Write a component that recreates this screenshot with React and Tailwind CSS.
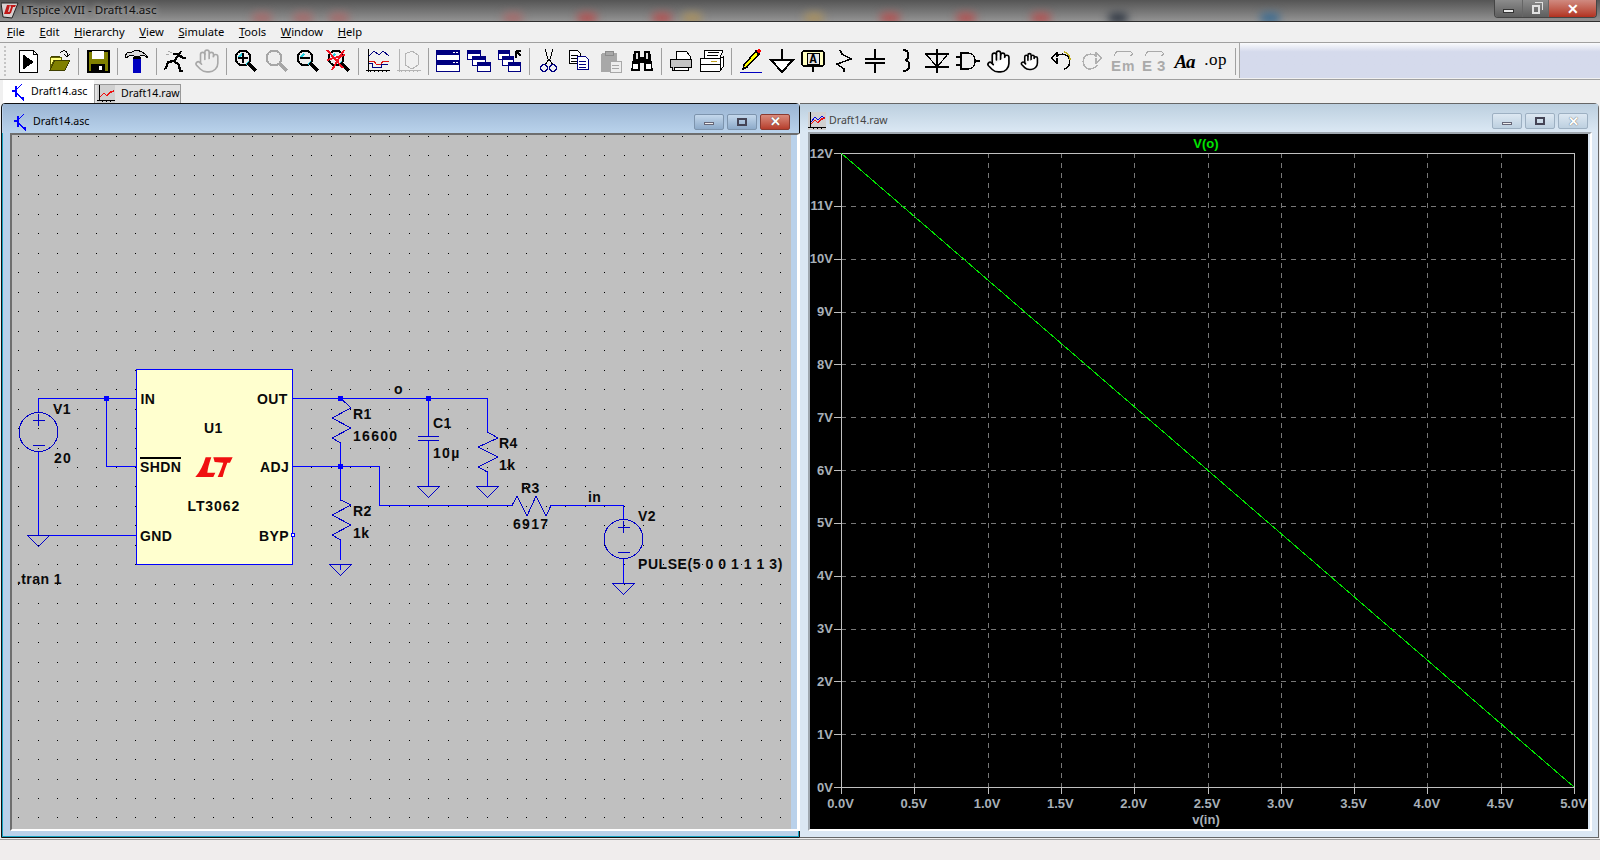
import { Hand } from "lucide-react";

const uiFont = "font-['Noto_Sans',sans-serif]";
const menus = ["File", "Edit", "Hierarchy", "View", "Simulate", "Tools", "Window", "Help"];
const blobs = [
  [262, "#a56a6a"], [303, "#a56a6a"], [339, "#a56a6a"], [513, "#a56a6a"], [587, "#b25050"], [662, "#b25050"],
  [692, "#a89060"], [814, "#a89060"], [890, "#b25050"], [966, "#b25050"], [1041, "#b25050"], [1118, "#2c3440"], [1270, "#3a6a90"],
];

function Ic({ children }) {
  return (
    <svg width="24" height="24" viewBox="0 0 24 24" shapeRendering="crispEdges" fill="none" stroke="#000" className="overflow-visible">
      {children}
    </svg>
  );
}

function Glass({ c = "#000", children }) {
  return (
    <Ic>
      <circle cx="9" cy="9" r="7.5" stroke={c} strokeWidth="2" fill="#eee" />
      {c === "#000" && <path d="M4 7l3-3 2 1-4 4zM11 15l3-3 1 1-2 3z" fill="#22cfe0" stroke="none" />}
      <path d="M14 14l8 8" stroke={c} strokeWidth="3.5" />
      {children}
    </Ic>
  );
}

function Page({ x, y, c = "#000" }) {
  return (
    <g>
      <path d={`M${x} ${y}h8l3 3v10h-11z`} fill="#fff" stroke={c} />
      <path d={`M${x + 2} ${y + 5}h7M${x + 2} ${y + 8}h7M${x + 2} ${y + 11}h7`} stroke={c} />
    </g>
  );
}

function Win({ x, y, w = 13, h = 9 }) {
  return (
    <g>
      <rect x={x} y={y} width={w} height={h} fill="#fff" stroke="#000080" />
      <rect x={x} y={y} width={w} height="3" fill="#000080" stroke="none" />
    </g>
  );
}

const icons = [
  <Ic><path d="M3 1h14l4 4v18h-18z" fill="#fff" /><path d="M17 1v4h4" /><path d="M7 6l10 7-10 7z" fill="#000" /></Ic>,
  <Ic><path d="M4 9h8v-2h-8z" fill="#808000" stroke="#404000" /><path d="M3 8h11v3h-7l-4 9z" fill="#ffff80" stroke="#606000" /><path d="M3 21l5-10h15l-5 10z" fill="#808000" stroke="#404000" /><path d="M13 4c2-3 6-3 7 0v3M17 5l3 3 3-3" stroke="#000" /></Ic>,
  <Ic><rect x="1.5" y="1.5" width="21" height="21" fill="#808000" stroke="#000" strokeWidth="2" /><rect x="6" y="2" width="12" height="8" fill="#fff" stroke="none" /><rect x="5" y="15" width="14" height="7" fill="#000" stroke="none" /><rect x="13" y="17" width="3" height="4" fill="#fff" stroke="none" /></Ic>,
  <Ic><path d="M0 7L2 4L7 3C12 0 19 2 23 9C19 6 16 6 15 7H9L6 6L1 9Z" fill="#dcdcdc" /><rect x="8" y="10" width="8" height="14" fill="#0000c0" stroke="none" /><rect x="8" y="8" width="8" height="2" fill="#000" stroke="none" /></Ic>,
  <Ic><path d="M17 2l-2 4-5 6 5 4 1 6h3M10 12l-6 1-2 6-2 1M15 5h-6M15 6l4 3h3" stroke="#000" strokeWidth="2.2" /><path d="M4 2l4 2M2 5l3 1" stroke="#aaa" /></Ic>,
  <Hand size={26} strokeWidth={1.5} color="#a8a8a8" fill="#eee" />,
  <Glass><path d="M9 4v10M4 9h10" strokeWidth="2.5" /></Glass>,
  <Glass c="#a6a6a6" />,
  <Glass><path d="M4 9h10" strokeWidth="2.5" /></Glass>,
  <Glass><path d="M0 1l16 18M17 1l-12 20M0 11l18-5" stroke="#f01020" strokeWidth="2" /></Glass>,
  <Ic><path d="M2 0v23M0 21h24M4 23v-2M8 23v-2M12 23v-2M16 23v-2M20 23v-2" /><path d="M3 7l5-5 5 4 4-4 6 5" stroke="#000080" /><path d="M3 12h5l2 3h5l2-3 6 1" stroke="#e01010" /><path d="M3 14h3v4h9v-3h7" stroke="#000080" /></Ic>,
  <Ic><path d="M2 0v23M0 21h24M4 23v-2M8 23v-2M12 23v-2M16 23v-2M20 23v-2M8 5l7-3 6 4v10l-6 4-7-4z" stroke="#b4b4b4" /></Ic>,
  <Ic><rect x="0.5" y="1.5" width="23" height="21" fill="#fff" stroke="#000080" strokeWidth="1.5" /><rect x="1" y="2" width="22" height="4" fill="#000080" stroke="none" /><rect x="1" y="12" width="22" height="4" fill="#000080" stroke="none" /><path d="M1 11h22" stroke="#000080" /><path d="M17 3h2M20 3h2M17 13h2M20 13h2" stroke="#fff" /></Ic>,
  <Ic><Win x={0.5} y={1.5} /><Win x={5.5} y={7.5} /><Win x={10.5} y={13.5} /></Ic>,
  <Ic><Win x={0.5} y={1.5} w={11} /><Win x={4.5} y={7.5} w={11} /><Win x={10.5} y={13.5} w={12} /><path d="M18 9V2M18 2h5M18 2l5 5" stroke="#000" strokeWidth="1.5" /></Ic>,
  <Ic><path d="M8 0l3 10 2 0 3-10M12 10l-4 6M12 10l4 6" stroke="#000" /><circle cx="7" cy="19" r="3.5" stroke="#000080" strokeWidth="1.5" /><circle cx="16" cy="19" r="3.5" stroke="#000080" strokeWidth="1.5" /></Ic>,
  <Ic><Page x={1} y={1} /><Page x={9} y={7} c="#000080" /></Ic>,
  <Ic><rect x="2" y="4" width="16" height="19" rx="2" fill="#a8a8a8" stroke="none" /><rect x="6" y="2" width="8" height="4" fill="#a8a8a8" stroke="#8a8a8a" /><path d="M11 12h11v11h-11z" fill="#eee" stroke="#a8a8a8" /><path d="M13 16h7M13 19h7" stroke="#a8a8a8" /></Ic>,
  <Ic><path d="M4 2h6v6h4v-6h6l3 20h-9v-8h-4v8h-9z" fill="#000" stroke="none" /><path d="M3 15h5v5h-5zM16 15h5v5h-5z" fill="#fff" stroke="none" /><path d="M6 4h2v6h-2zM16 4h2v6h-2z" fill="#ddd" stroke="none" /></Ic>,
  <Ic><path d="M7 2h10l4 5v3h-14z" fill="#fff" /><path d="M1 10h21v8h-3v3h-16v-3h-2z" fill="#c4c4c4" /><path d="M5 18h14v3h-14z" fill="#fff" /></Ic>,
  <Ic><path d="M5 1h18l-3 8h-16z" fill="#fff" /><path d="M8 3h11M7 6h11" /><path d="M0 9h20l3-1v10l-3 4h-20z" fill="#fff" /><path d="M1 15h19M20 9v13" /><path d="M11 12h6" stroke="#c0a020" /></Ic>,
  <Ic><path d="M5 16l-1 4 4-2 12-13-3-3z" fill="#ffff00" stroke="#000" strokeWidth="1.5" /><path d="M17 2l3 3 2-3-2-2z" fill="#ff0000" stroke="none" /><path d="M1 23h22" stroke="#0000c0" /></Ic>,
  <Ic><path d="M12 0v11" strokeWidth="1.5" /><path d="M1 11h22l-11 12z" fill="#fff" strokeWidth="2" /></Ic>,
  <Ic><rect x="1" y="2" width="22" height="15" rx="2" fill="#ffffc0" stroke="#000" strokeWidth="1.5" /><rect x="6" y="4" width="12" height="11" fill="#e8e8e8" stroke="#000" /><text x="12" y="14" textAnchor="middle" stroke="none" fill="#000" className="font-['Liberation_Mono',monospace] font-bold text-[12px]">A</text><path d="M12 17v6" strokeWidth="1.5" /></Ic>,
  <Ic><path d="M8 1l2 4 9 5-14 5 7 5v3" strokeWidth="1.5" /></Ic>,
  <Ic><path d="M12 0v10M12 14v10" strokeWidth="1.5" /><path d="M2 10h20M2 14h20" strokeWidth="2" /></Ic>,
  <Ic><path d="M9 1c7 0 7 9 2 10 6 1 6 11-2 11" strokeWidth="2" /></Ic>,
  <Ic><path d="M12 0v24M0 5h24M1 5l11 13 11-13M0 18h24" strokeWidth="1.2" /></Ic>,
  <Ic><path d="M0 8h5M0 16h5M18 12h6" strokeWidth="1.5" /><path d="M5 4h7c5 0 7 4 7 8s-2 8-7 8h-7z" fill="#eee" strokeWidth="1.5" /></Ic>,
  <Hand size={25} strokeWidth={1.6} color="#000" fill="#fff" />,
  <Hand size={19} strokeWidth={2} color="#000" fill="#fff" />,
  <Ic><path d="M2 9l6-5v3c4-3 10-2 12 2 2 5 0 10-5 11" strokeWidth="1.5" /><path d="M15 3c4 1 6 4 6 8" stroke="#c0b020" strokeWidth="1.5" /><path d="M2 9l6 5v-5" strokeWidth="1.5" /></Ic>,
  <Ic><path d="M22 9l-6-5v3c-4-3-10-2-12 2-2 5 0 10 5 11 4 0 6-1 8-4M22 9l-6 5v-5" stroke="#b0b0b0" strokeWidth="1.5" /></Ic>,
  <Ic><text x="0" y="22" stroke="none" fill="#aaa" className="font-['Liberation_Sans',sans-serif] font-bold text-[15px]">E</text><text x="11" y="22" stroke="none" fill="#aaa" className="font-['Liberation_Sans',sans-serif] font-bold text-[14px]">m</text><path d="M3 7l3-5h13l3 3-3 2" stroke="#aaa" /></Ic>,
  <Ic><text x="0" y="22" stroke="none" fill="#aaa" className="font-['Liberation_Sans',sans-serif] font-bold text-[15px]">E</text><text x="15" y="22" stroke="none" fill="#aaa" className="font-['Liberation_Sans',sans-serif] font-bold text-[15px]">3</text><path d="M3 7l3-5h13l3 3-3 2" stroke="#aaa" /></Ic>,
  <span className="font-['Liberation_Serif',serif] font-bold italic text-[19px] leading-none text-black tracking-[-1px]">Aa</span>,
  <span className="font-['Liberation_Serif',serif] text-[17px] leading-none text-black tracking-[0.5px] -mt-1">.op</span>,
];

// item counts per toolbar group, a separator follows each group
const toolbarLayout = [2, 1, 1, 2, 4, 2, 3, 4, 2, 16];

function Toolbar() {
  const items = [];
  let n = 0;
  toolbarLayout.forEach((count, g) => {
    for (let i = 0; i < count; i++) {
      items.push(
        <div key={n} className="w-[31px] h-full flex items-center justify-center shrink-0">
          {icons[n]}
        </div>
      );
      n++;
    }
    items.push(
      <div key={"s" + g} className="w-2 h-full flex items-center justify-center shrink-0">
        <div className="w-px h-[27px] bg-[#a0a0a0]" />
      </div>
    );
  });
  return (
    <div className="h-[37px] flex border-b border-[#a0a0a0] bg-[#f0f0f0] shrink-0">
      <div className="w-3 flex flex-col justify-center gap-[2px] pl-1 shrink-0">
        {[0, 1, 2, 3, 4, 5, 6, 7].map((i) => (
          <div key={i} className="w-[2px] h-[2px] bg-[#c4c4c4]" />
        ))}
      </div>
      {items}
      <div className="flex-1 border-l border-[#a8a8a8] bg-gradient-to-b from-[#fafbfd] from-[0%] to-[#d5daec] to-[25%] mb-[1px]" />
    </div>
  );
}

function WinButtons({ active }) {
  const cls = "w-[30px] h-[16px] rounded-[2px] border flex items-center justify-center";
  const base = active
    ? "border-[#7d94ad] bg-gradient-to-b from-[#c4d8ec] to-[#8daac9]"
    : "border-[#9db0c2] bg-gradient-to-b from-[#dde8f2] to-[#bdd0e0]";
  return (
    <div className="flex gap-[3px]">
      <div className={`${cls} ${base}`}>
        <div className="w-[10px] h-[3px] mt-1 bg-[#eee] border-[0.5px] border-[#667]" />
      </div>
      <div className={`${cls} ${base}`}>
        <div className="w-[10px] h-[8px] border-2 border-[#445]" />
      </div>
      <div className={`${cls} ${active ? "border-[#8a3a30] bg-gradient-to-b from-[#d98a7c] to-[#b63d2c]" : base}`}>
        <span className="text-[13px] leading-none font-bold text-white [text-shadow:0_0_1px_#333] font-['Liberation_Sans',sans-serif]">✕</span>
      </div>
    </div>
  );
}

function TransistorIcon() {
  return (
    <svg width="14" height="18" viewBox="0 0 14 18" shapeRendering="crispEdges" fill="none" stroke="#0000ff" className="shrink-0">
      <path d="M4 3v11M0 8h4M4 7l6-6M4 10l8 7" strokeWidth="1.4" />
      <path d="M8 14h4v4z" fill="#0000ff" stroke="none" />
    </svg>
  );
}

function RawIcon({ small }) {
  return (
    <svg width="18" height="18" viewBox="0 0 18 18" shapeRendering="crispEdges" fill="none" className="shrink-0">
      <rect width="18" height="18" fill="#d0d0d0" />
      <path d="M2 0v16M0 15h18M5 17v-2M9 17v-2M13 17v-2" stroke="#000" />
      {small ? <path d="M3 10l4-5 3 3 4-4 3 3" stroke="#0000e0" /> : null}
      <path d="M3 12l4-4 3 3 4-4 3-1" stroke="#ee1010" strokeWidth="1.4" />
    </svg>
  );
}

function Ground({ x, y }) {
  return <path d={`M${x - 11} ${y}h22l-11 11z`} />;
}

function Res({ points }) {
  return <polyline points={points} fill="none" />;
}

function Source({ x, y }) {
  return (
    <g>
      <circle cx={x} cy={y} r="19.5" />
      <path d={`M${x - 6} ${y - 12}h12M${x} ${y - 18}v12M${x - 6} ${y + 13}h12`} />
    </g>
  );
}

function Junction({ x, y }) {
  return <rect x={x - 2} y={y - 2} width="5" height="5" fill="#0000ff" stroke="none" />;
}

const tight = "tracking-[0.4px]";
const digits = "tracking-[1.3px]";
const labels = [
  ["V1", 53, 414, tight], ["20", 54, 463, digits], ["IN", 140.5, 404, tight], ["OUT", 257, 404, tight], ["U1", 204, 433, tight],
  ["SHDN", 140, 472, tight], ["ADJ", 260, 472, tight], ["LT3062", 187.5, 511, "tracking-[0.9px]"], ["GND", 140, 541, tight],
  ["BYP", 259, 541, tight], ["R1", 353, 419, tight], ["16600", 353, 441, digits], ["R2", 353, 516, tight], ["1k", 353, 538, tight],
  ["o", 394, 394, tight], [".tran 1", 17, 584, tight], ["C1", 433, 428, tight], ["10µ", 433, 458, digits], ["R4", 499, 448, tight],
  ["1k", 499, 470, tight], ["R3", 521, 493, tight], ["6917", 513, 529, digits], ["in", 588, 502, tight], ["V2", 638, 521, tight],
  ["PULSE(5 0 0 1 1 1 3)", 638, 569, "tracking-[0.55px]"],
];

function Schematic() {
  let dots = "";
  for (let r = 0; r < 36; r++) {
    for (let c = 0; c < 40; c++) {
      dots += `M${Math.round(18 + c * 19.54)} ${Math.round(136 + r * 19.47)}h1v1h-1z`;
    }
  }
  return (
    <svg width="779" height="694" viewBox="12 135 779 694" shapeRendering="crispEdges" className="block bg-[#c0c0c0]">
      <path d={dots} fill="#000" />
      <rect x="136.5" y="369.5" width="156" height="195" fill="#ffffcf" stroke="#0000ff" />
      <g fill="none" stroke="#0000ff">
        <path d="M136 398.5H38.5V413M38.5 452V535.5M136 535.5H38.5M106.5 398.5V466.5H136" />
        <path d="M292 398.5H487.5V432M292 466.5H379.5V505.5H512M340.5 442V500M340.5 570V564M428.5 398.5V436M428.5 440V486M487.5 472V486" />
        <path d="M551 505.5H623.5V520M623.5 559V583M340.5 540V560" />
      </g>
      <g fill="none" stroke="#0000c8">
        <Res points="340.5,398 351,408 332,418 351,428 332,438 340.5,443" />
        <Res points="340.5,500 351,505 332,515 351,525 332,535 340.5,540" />
        <Res points="487.5,432 498,438 478,447 498,457 478,467 487.5,472" />
        <Res points="512,505.5 517,496 527,516 536,496 546,516 551,505.5" />
        <Source x={38.5} y={432} />
        <Source x={623.5} y={539} />
        <path d="M418 436h21M418 440h21" />
        <Ground x={38.5} y={535.5} />
        <Ground x={340.5} y={564.5} />
        <Ground x={428.5} y={486.5} />
        <Ground x={487.5} y={486.5} />
        <Ground x={623.5} y={583.5} />
      </g>
      <Junction x={106} y={398} />
      <Junction x={340} y={398} />
      <Junction x={340} y={466} />
      <Junction x={428} y={398} />
      <rect x="291" y="533" width="3" height="3" fill="#fff" stroke="#0000ff" />
      <path d="M140 456.5h41v2h-41z" fill="#000" />
      <g transform="translate(0 350) scale(0.3333)" fill="#f01010" shapeRendering="auto">
        <path d="M586 381Q606 360 617 322L634 322Q624 350 622 368L646 368L640 381Z" />
        <path d="M640 322L698 322L690 338L682 338Q673 360 668 381L653 381Q665 355 670 338L644 336Z" />
      </g>
      <g fill="#0a0a0a" className="font-['Liberation_Sans',sans-serif] font-bold text-[14px]">
        {labels.map(([t, x, y, track]) => (
          <text key={t + x} x={x} y={y} className={track}>{t}</text>
        ))}
      </g>
    </svg>
  );
}

function Plot() {
  const x0 = 841, x1 = 1574, y0 = 787, y1 = 153;
  const xs = Array.from({ length: 11 }, (_, i) => x0 + (i * (x1 - x0)) / 10);
  const ys = Array.from({ length: 13 }, (_, i) => y0 - (i * (y0 - y1)) / 12);
  return (
    <svg width="778" height="695" viewBox="810 134 778 695" className="block bg-black">
      <g shapeRendering="crispEdges">
        {xs.slice(1, -1).map((x) => (
          <path key={x} d={`M${Math.round(x) + 0.5} ${y1}V${y0}`} stroke="#787878" strokeDasharray="5 5" />
        ))}
        {ys.slice(1, -1).map((y) => (
          <path key={y} d={`M${x0} ${Math.round(y) + 0.5}H${x1}`} stroke="#787878" strokeDasharray="5 5" />
        ))}
        <rect x={x0 + 0.5} y={y1 + 0.5} width={x1 - x0} height={y0 - y1} fill="none" stroke="#c0c0c0" />
        {xs.map((x) => (
          <path key={x} d={`M${Math.round(x) + 0.5} ${y0}v7`} stroke="#c0c0c0" />
        ))}
        {ys.map((y) => (
          <path key={y} d={`M834 ${Math.round(y) + 0.5}h7`} stroke="#c0c0c0" />
        ))}
        <path d={`M${x0} ${y1}L${x1} ${y0}`} stroke="#00e600" />
      </g>
      <g fill="#a8b0b8" className="font-['Liberation_Sans',sans-serif] font-bold text-[13px]">
        {xs.map((x, i) => (
          <text key={x} x={x - 0.5} y="808" textAnchor="middle">{(i * 0.5).toFixed(1)}V</text>
        ))}
        {ys.map((y, i) => (
          <text key={y} x="833" y={y + 4.5} textAnchor="end">{i}V</text>
        ))}
        <text x="1206" y="824" textAnchor="middle">v(in)</text>
        <text x="1206" y="148" textAnchor="middle" fill="#00e600">V(o)</text>
      </g>
    </svg>
  );
}

export default function App() {
  return (
    <div className={`${uiFont} w-[1600px] h-[860px] overflow-hidden flex flex-col bg-[#f0f0f0] text-[10.6px] text-black`}>
      {/* title bar, desktop showing through the glass */}
      <div className="relative h-[22px] shrink-0 flex items-start justify-between bg-gradient-to-b from-[#555] to-[#939393] border-b border-[#2e2e2e] overflow-hidden">
        {blobs.map(([x, c]) => (
          <div key={x} className="absolute top-[13px] w-5 h-[10px] rounded-full blur-[4px]" style={{ left: x - 10, background: c }} />
        ))}
        <div className="relative flex items-center h-[20px]">
          <svg width="18" height="18" viewBox="0 0 18 18" className="ml-px">
            <path d="M0 2h17l-6 15-9-1z" fill="#d8d0d0" stroke="#222" />
            <path d="M3 13l3-9h3l-2 7h3l-1 2zM9 4h6l-1 2h-2l-2 6h-2l2-6z" fill="#c01818" />
          </svg>
          <span className="ml-[2px] text-[#111] text-[11.6px] [text-shadow:0_0_6px_#ddd]">LTspice XVII - Draft14.asc</span>
        </div>
        <div className="relative flex h-[18px] mr-[3px] rounded-b-[4px] border border-t-0 border-[#444] overflow-hidden">
          <div className="w-[28px] flex items-center justify-center border-r border-[#666] bg-gradient-to-b from-[#8c8c8c] to-[#5e5e5e]">
            <div className="w-[11px] h-[4px] bg-[#e8e8e8] border-[0.5px] border-[#333] mt-1" />
          </div>
          <div className="w-[26px] flex items-center justify-center border-r border-[#666] bg-gradient-to-b from-[#8c8c8c] to-[#5e5e5e]">
            <div className="relative w-[8px] h-[9px] mt-[2px] border-2 border-[#e0e0e0]">
              <div className="absolute -top-[5px] left-[1px] w-[8px] h-[8px] border border-[#e0e0e0] border-l-0 border-b-0" />
            </div>
          </div>
          <div className="w-[47px] flex items-center justify-center bg-gradient-to-b from-[#cf8a80] to-[#b1301f]">
            <span className="text-[14px] leading-none font-bold text-white font-['Liberation_Sans',sans-serif]">✕</span>
          </div>
        </div>
      </div>

      <div className="h-[21px] shrink-0 flex items-center gap-[14.6px] pl-[7px] border-b border-[#a0a0a0] text-[11.2px]">
        {menus.map((m) => (
          <span key={m}>
            <span className="underline">{m[0]}</span>
            {m.slice(1)}
          </span>
        ))}
      </div>

      <Toolbar />

      <div className="h-[23px] shrink-0 flex items-end pl-[3px]">
        <div className="w-[91px] h-[23px] bg-white flex items-center gap-[5px] pl-[9px]">
          <TransistorIcon />
          <span>Draft14.asc</span>
        </div>
        <div className="w-[87px] h-[19px] bg-[#e2e2e2] border border-b-0 border-[#999] flex items-center gap-[6px] pl-[2px]">
          <RawIcon />
          <span>Draft14.raw</span>
        </div>
      </div>

      <div className="flex-1 min-h-0 flex">
        {/* schematic window */}
        <div className="ml-px w-[799px] h-full border border-[#111] rounded-t-[4px] bg-[#b9d1ea] flex flex-col">
          <div className="h-[29px] shrink-0 ml-px pl-[11px] pr-[9px] pt-[6px] flex items-center gap-[5px] bg-gradient-to-b from-[#9bb5d3] to-[#b9d2eb]">
            <TransistorIcon />
            <span className="flex-1">Draft14.asc</span>
            <WinButtons active />
          </div>
          <div className="flex-1 min-h-0 border-l border-b border-r border-[#17a4c4] pl-[7px]">
            <div className="w-[785px] border-l-2 border-t-2 border-[#6e6e6e] border-r-4 border-r-white border-b-2 border-b-white box-content">
              <Schematic />
            </div>
          </div>
        </div>

        {/* plot window */}
        <div className="w-[799px] h-full border-t border-r border-b border-[#666] rounded-tr-[5px] bg-[#dbe7f3] flex flex-col">
          <div className="h-[28px] shrink-0 pl-2 pr-[10px] pt-[6px] flex items-center gap-[3px] bg-gradient-to-b from-[#bccfdf] to-[#dbe8f4] text-[#444]">
            <RawIcon small />
            <span className="flex-1">Draft14.raw</span>
            <WinButtons />
          </div>
          <div className="flex-1 min-h-0 pl-2">
            <div className="w-[780px] border-l-2 border-t-2 border-[#a0a8b0] border-r-2 border-r-white border-b-2 border-b-white box-content">
              <Plot />
            </div>
          </div>
        </div>
      </div>

      <div className="h-[21px] shrink-0 mt-px border-t border-[#a0a0a0] bg-[#f0eded]" />
    </div>
  );
}
